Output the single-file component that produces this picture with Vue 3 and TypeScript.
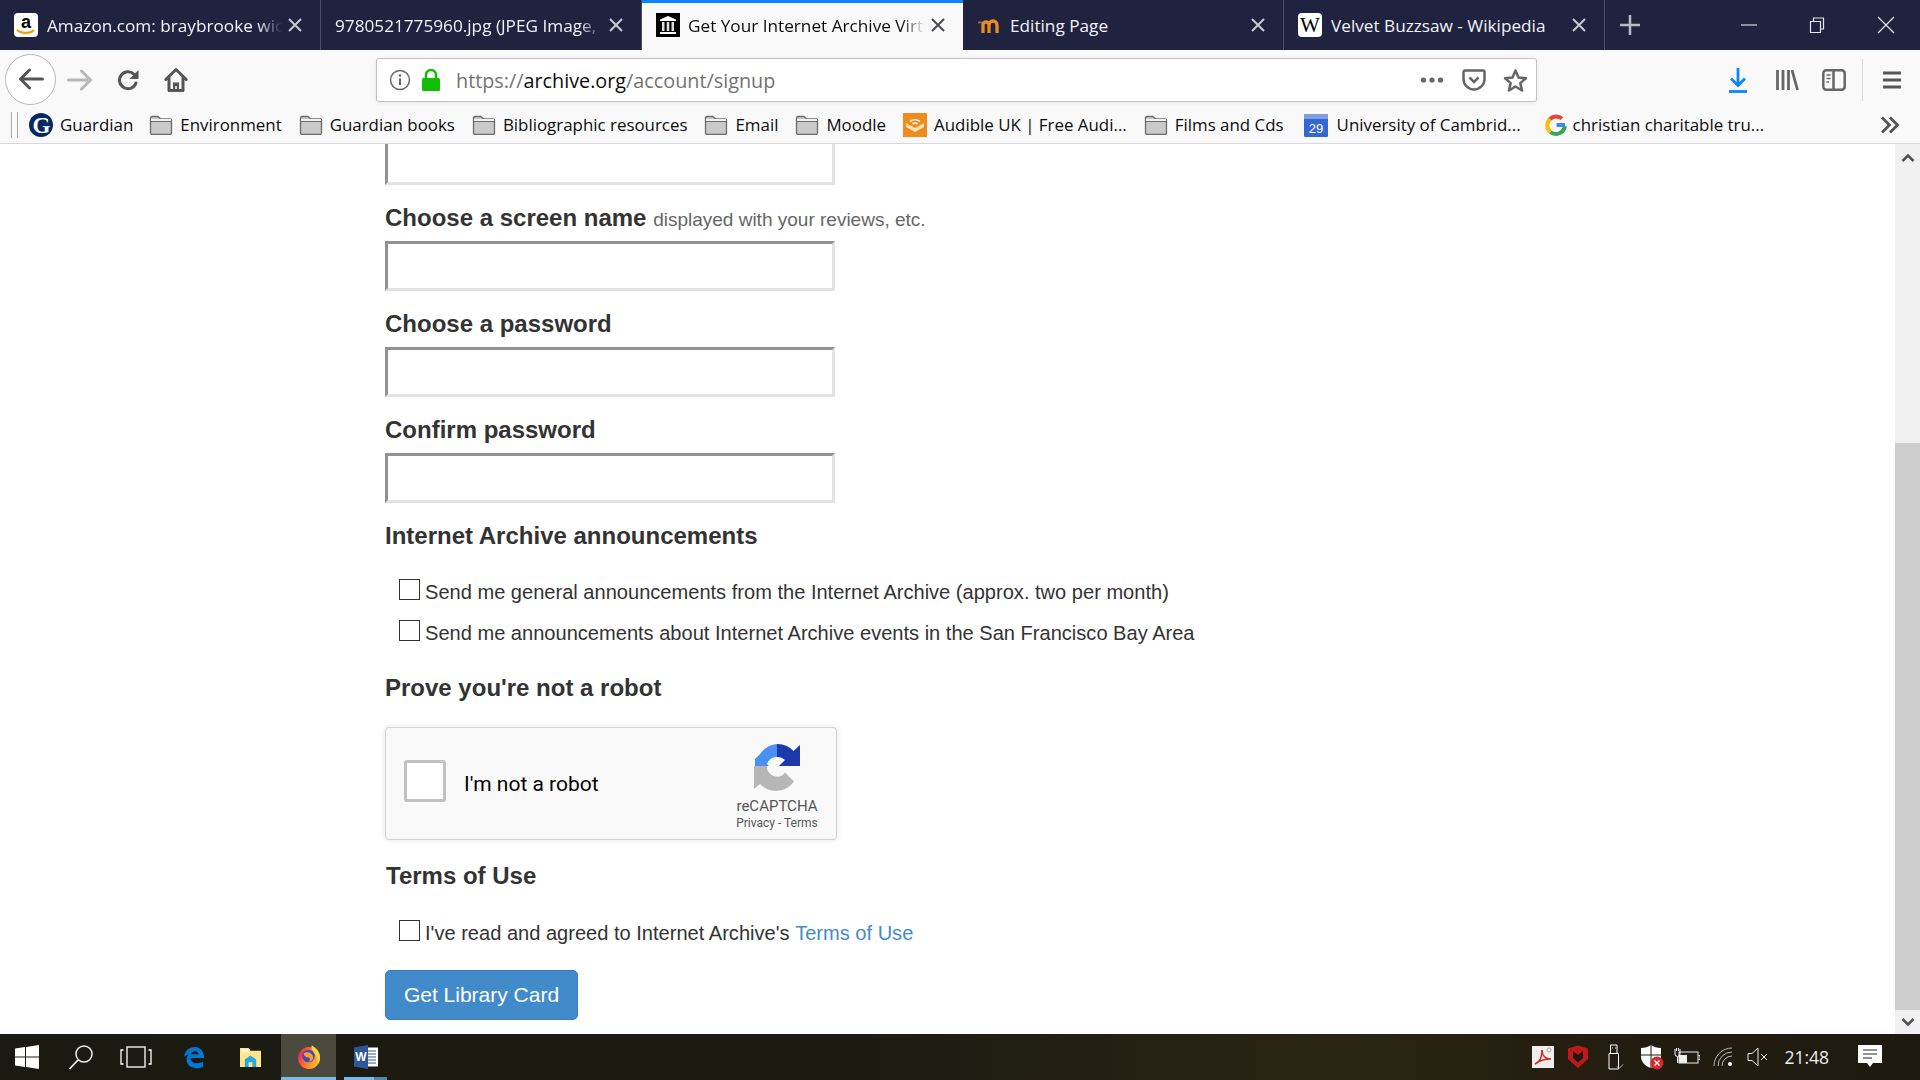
<script setup lang="ts">
const bookmarks = [
  { label: 'Environment' },
  { label: 'Guardian books' },
  { label: 'Bibliographic resources' },
  { label: 'Email' },
  { label: 'Moodle' },
]
const fields = ['Choose a password', 'Confirm password']
const announcements = [
  'Send me general announcements from the Internet Archive (approx. two per month)',
  'Send me announcements about Internet Archive events in the San Francisco Bay Area',
]
</script>

<template>
  <div class="screen">
    <svg class="defs" width="0" height="0" aria-hidden="true">
      <symbol id="folder" viewBox="0 0 24 20">
        <path d="M1.500 18V3a1.500 1.500 0 0 1 1.500-1.500h6l2.500 2.500H21A1.500 1.500 0 0 1 22.500 5.500V18A1.500 1.500 0 0 1 21 19.500H3A1.500 1.500 0 0 1 1.500 18z" fill="#c9c9c9" stroke="#6b6b6b" stroke-width="1.300" />
        <path d="M2 6.500h20" stroke="#6b6b6b" stroke-width="1" />
        <path d="M2 5h20" stroke="#f2f2f2" stroke-width="2" />
      </symbol>
      <symbol id="close" viewBox="0 0 16 16">
        <path d="M2 2l12 12M14 2L2 14" stroke="currentColor" stroke-width="2" fill="none" />
      </symbol>
    </svg>

    <header class="tabstrip">
      <div class="tab">
        <svg class="favicon" viewBox="0 0 24 24"><rect width="24" height="24" rx="4" fill="#fff" /><text x="12" y="15" text-anchor="middle" class="fav-a">a</text><path d="M3 17c5 4 13 4 17 0" stroke="#f90" stroke-width="2" fill="none" /></svg>
        <span class="tab-title">Amazon.com: braybrooke wic</span>
        <svg class="tab-x" viewBox="0 0 16 16"><use href="#close" /></svg>
      </div>
      <div class="tab">
        <span class="tab-title">9780521775960.jpg (JPEG Image,</span>
        <svg class="tab-x" viewBox="0 0 16 16"><use href="#close" /></svg>
      </div>
      <div class="tab active">
        <svg class="favicon" viewBox="0 0 24 24"><rect width="24" height="24" fill="#000" /><path d="M12 3l8 3.500v1.500H4V6.500z" fill="#fff" /><path d="M6 9h2.500v9H6zM10.700 9h2.600v9h-2.600zM15.500 9H18v9h-2.500z" fill="#ddd" /><path d="M4 19h16v2H4z" fill="#fff" /></svg>
        <span class="tab-title">Get Your Internet Archive Virt</span>
        <svg class="tab-x" viewBox="0 0 16 16"><use href="#close" /></svg>
      </div>
      <div class="tab">
        <svg class="favicon" viewBox="0 0 24 24"><path d="M1 9.500h5" stroke="#8a6a45" stroke-width="2" /><path d="M6 20v-8.500M12 20v-8a3 3 0 0 0-6 0M20 20v-8a3.500 3.500 0 0 0-8 0" stroke="#ec8a20" stroke-width="3.300" fill="none" /></svg>
        <span class="tab-title plain">Editing Page</span>
        <svg class="tab-x" viewBox="0 0 16 16"><use href="#close" /></svg>
      </div>
      <div class="tab">
        <svg class="favicon" viewBox="0 0 24 24"><rect width="24" height="24" rx="4" fill="#fff" /><text x="12" y="19" text-anchor="middle" class="fav-w">W</text></svg>
        <span class="tab-title plain">Velvet Buzzsaw - Wikipedia</span>
        <svg class="tab-x" viewBox="0 0 16 16"><use href="#close" /></svg>
      </div>
      <div class="newtab">
        <svg width="22" height="22" viewBox="0 0 22 22"><path d="M11 1v20M1 11h20" stroke="#b9bbc6" stroke-width="2.500" /></svg>
      </div>
      <div class="winctl">
        <svg width="16" height="16" viewBox="0 0 16 16"><path d="M0 8h16" stroke="#d6d7de" stroke-width="1.200" /></svg>
        <svg width="16" height="16" viewBox="0 0 16 16"><path d="M1.500 4.500h10v11h-10zM4.500 4V1h10v11H12" stroke="#e6e7ec" stroke-width="1.200" fill="none" /></svg>
        <svg width="18" height="18" viewBox="0 0 18 18"><path d="M1 1l16 16M17 1L1 17" stroke="#e6e7ec" stroke-width="1.200" /></svg>
      </div>
    </header>

    <nav class="navbar">
      <button class="back" aria-label="Back">
        <svg width="26" height="22" viewBox="0 0 26 22"><path d="M24.500 11H3M11.500 2L2.500 11l9 9" stroke="#555" stroke-width="3" fill="none" stroke-linecap="round" stroke-linejoin="round" /></svg>
      </button>
      <svg class="nav-ico fwd" width="26" height="22" viewBox="0 0 26 22"><path d="M1.500 11H23M14.500 2l9 9-9 9" stroke="#b8b8b8" stroke-width="3" fill="none" stroke-linecap="round" stroke-linejoin="round" /></svg>
      <svg class="nav-ico reload" width="24" height="24" viewBox="0 0 24 24"><path d="M20 15a8.500 8.500 0 1 1-2.200-9" stroke="#555" stroke-width="3" fill="none" stroke-linecap="round" /><path d="M22.500 2v9h-9z" fill="#555" /></svg>
      <svg class="nav-ico home" width="24" height="26" viewBox="0 0 24 26"><path d="M1.800 12.500L12 2.500l10.200 10M5 11v12.500h14V11" stroke="#555" stroke-width="3" fill="none" stroke-linecap="round" stroke-linejoin="round" /><path d="M9 15.500h6V23h-2.200v-4h-1.600v4H9z" fill="#555" /></svg>
      <div class="urlbar">
        <svg width="22" height="22" viewBox="0 0 22 22"><circle cx="11" cy="11" r="9.500" stroke="#666" stroke-width="1.500" fill="none" /><path d="M11 9.500V16" stroke="#666" stroke-width="2" /><circle cx="11" cy="6.500" r="1.300" fill="#666" /></svg>
        <svg class="lock" width="20" height="24" viewBox="0 0 20 24"><path d="M5 11V7a5 5 0 0 1 10 0v4" stroke="#12bc00" stroke-width="2.500" fill="none" /><rect x="1" y="10" width="18" height="13" rx="1.500" fill="#12bc00" /></svg>
        <div class="url"><span>https://</span><b>archive.org</b><span>/account/signup</span></div>
        <svg class="dots" width="24" height="6" viewBox="0 0 24 6"><circle cx="3.500" cy="3" r="2.600" fill="#666" /><circle cx="12" cy="3" r="2.600" fill="#666" /><circle cx="20.500" cy="3" r="2.600" fill="#666" /></svg>
        <svg class="pocket" width="24" height="24" viewBox="0 0 24 24"><path d="M3 2.500h18a1.500 1.500 0 0 1 1.500 1.500v7a10.500 10.500 0 0 1-21 0V4A1.500 1.500 0 0 1 3 2.500z" stroke="#666" stroke-width="2.500" fill="none" /><path d="M7.500 9.500l4.500 4.500 4.500-4.500" stroke="#666" stroke-width="2.500" fill="none" /></svg>
        <svg class="star" width="25" height="25" viewBox="0 0 25 25"><path d="M12.500 2.500l3 7 7.500.7-5.700 4.900 1.800 7.400-6.600-4-6.600 4 1.800-7.400L2 10.200l7.500-.7z" stroke="#666" stroke-width="2.500" fill="none" stroke-linejoin="round" /></svg>
      </div>
      <div class="nav-right">
        <svg class="dl" width="20" height="26" viewBox="0 0 20 26"><path d="M10 1v17M3 11.500l7 7 7-7" stroke="#0a84ff" stroke-width="2.800" fill="none" /><path d="M1 24.500h18" stroke="#0a84ff" stroke-width="2.800" /></svg>
        <svg class="lib" width="24" height="24" viewBox="0 0 24 24"><path d="M2.500 2v20M8 2v20M13.500 2v20M17 2l5.500 20" stroke="#666" stroke-width="2.800" fill="none" /></svg>
        <svg class="side" width="24" height="24" viewBox="0 0 24 24"><rect x="1.300" y="2.300" width="21.400" height="19.400" rx="3" stroke="#666" stroke-width="2.500" fill="none" /><path d="M11.500 3v18" stroke="#666" stroke-width="2.500" /><path d="M4.500 7h4M4.500 10.500h4M4.500 14h2.500" stroke="#666" stroke-width="1.500" /></svg>
        <i class="nav-sep"></i>
        <svg class="menu" width="20" height="20" viewBox="0 0 20 20"><path d="M1 3h18M1 10h18M1 17h18" stroke="#555" stroke-width="2.800" /></svg>
      </div>
    </nav>

    <div class="bookbar">
      <i class="bm-sep"></i>
      <div class="bm guardian">
        <svg class="bm-ico" viewBox="0 0 24 24"><circle cx="12" cy="12" r="12" fill="#052962" /><text x="12.500" y="19.500" text-anchor="middle" class="fav-g">G</text></svg>
        <span>Guardian</span>
      </div>
      <div v-for="b in bookmarks" :key="b.label" class="bm">
        <svg class="bm-ico folder"><use href="#folder" /></svg>
        <span>{{ b.label }}</span>
      </div>
      <div class="bm audible">
        <svg class="bm-ico" viewBox="0 0 24 24"><rect width="24" height="24" fill="#f28a1c" /><path d="M3 10l9 5 9-5v4l-9 5-9-5z" fill="#fde2b5" /><path d="M7 8.500a8 8 0 0 1 10 0M9.500 11a4 4 0 0 1 5 0" stroke="#fff" stroke-width="1.600" fill="none" /></svg>
        <span>Audible UK | Free Audi...</span>
      </div>
      <div class="bm">
        <svg class="bm-ico folder"><use href="#folder" /></svg>
        <span>Films and Cds</span>
      </div>
      <div class="bm cal">
        <svg class="bm-ico" viewBox="0 0 24 24"><rect y="1" width="24" height="23" rx="1" fill="#3367d6" /><rect y="1" width="24" height="5" fill="#7d9fe4" /><text x="12" y="20" text-anchor="middle" class="fav-cal">29</text></svg>
        <span>University of Cambrid...</span>
      </div>
      <div class="bm goog">
        <svg class="bm-ico" viewBox="0 0 24 24"><path d="M21 12H12.500" stroke="#4285f4" stroke-width="4" /><path d="M20.800 13a9 9 0 0 1-14.500 6" stroke="#34a853" stroke-width="4" fill="none" /><path d="M6.300 19a9 9 0 0 1-.300-13" stroke="#fbbc05" stroke-width="4" fill="none" /><path d="M6 6a9 9 0 0 1 12-.500" stroke="#ea4335" stroke-width="4" fill="none" /></svg>
        <span>christian charitable tru...</span>
      </div>
      <svg class="more" width="20" height="18" viewBox="0 0 20 18"><path d="M2 1.500L9.500 9 2 16.500M10 1.500L17.500 9 10 16.500" stroke="#555" stroke-width="2.800" fill="none" /></svg>
    </div>

    <div class="viewport">
      <main class="page">
        <form class="form" @submit.prevent>
          <div class="input"></div>

          <label class="label">Choose a screen name <small>displayed with your reviews, etc.</small></label>
          <div class="input"></div>

          <template v-for="f in fields" :key="f">
            <label class="label">{{ f }}</label>
            <div class="input"></div>
          </template>

          <h3 class="heading ann">Internet Archive announcements</h3>
          <div class="checks">
            <div v-for="a in announcements" :key="a" class="check"><i class="box"></i>{{ a }}</div>
          </div>

          <h3 class="heading robot">Prove you're not a robot</h3>
          <div class="captcha">
            <i class="cap-box"></i>
            <span class="cap-text">I'm not a robot</span>
            <div class="cap-brand">
              <svg width="50" height="50" viewBox="0 0 50 50">
                <path d="M3 24V17L9 11A22 22 0 0 1 25 2V15A10 10 0 0 0 15 22L17 24z" fill="#4a90f2" />
                <path d="M25 2A22 22 0 0 1 41.500 9L48 3V24H27l6-6A10 10 0 0 0 25 15z" fill="#1c3aa9" />
                <path d="M2 24H15A10 10 0 0 0 33 30.500L42 39.500A22 22 0 0 1 8 42L2 47z" fill="#b6b6b6" />
              </svg>
              <div class="cap-name">reCAPTCHA</div>
              <div class="cap-links">Privacy - Terms</div>
            </div>
          </div>

          <h3 class="heading terms">Terms of Use</h3>
          <div class="check"><i class="box"></i>I've read and agreed to Internet Archive's&nbsp;<a class="link">Terms of Use</a></div>

          <button class="submit" type="submit">Get Library Card</button>
        </form>
      </main>
      <aside class="scrollbar">
        <div class="sb-btn top"><svg width="14" height="10" viewBox="0 0 14 10"><path d="M1.500 8L7 2.500 12.500 8" stroke="#505050" stroke-width="2.500" fill="none" /></svg></div>
        <div class="sb-track"><div class="sb-thumb"></div></div>
        <div class="sb-btn"><svg width="14" height="10" viewBox="0 0 14 10"><path d="M1.500 2L7 7.500 12.500 2" stroke="#505050" stroke-width="2.500" fill="none" /></svg></div>
      </aside>
    </div>

    <footer class="taskbar">
      <div class="tb-left">
        <div class="tb-item start"><svg width="24" height="24" viewBox="0 0 24 24"><path d="M0 3.500l10-1.400V11.500H0zM11 2l13-2v11.500H11zM0 12.500h10V22L0 20.500zM11 12.500h13V24l-13-2z" fill="#fff" /></svg></div>
        <div class="tb-item search"><svg width="26" height="26" viewBox="0 0 26 26"><circle cx="16" cy="10" r="8" stroke="#eee" stroke-width="1.500" fill="none" /><path d="M10 16L1.500 25" stroke="#eee" stroke-width="1.800" /></svg></div>
        <div class="tb-item tview"><svg width="32" height="22" viewBox="0 0 32 22"><path d="M3.500 4H1v14h2.500M28.500 4H31v14h-2.500" stroke="#fff" stroke-width="1.300" fill="none" /><rect x="7" y="1" width="18" height="20" stroke="#fff" stroke-width="1.300" fill="none" /></svg></div>
        <div class="tb-item edge"><svg width="22" height="24" viewBox="0 0 24 24"><path d="M1 12C2 4 8 1 13 1c6 0 10 5 10 12H8c0 5 7 8 14 4v6c-9 3-18 0-18-8 0-3 1-5 3-6-2 0-4 1-6 3z" fill="#0078d7" /><path d="M8.500 9H17c0-4-7-5-8.500 0z" fill="#1c1a10" /></svg></div>
        <div class="tb-item explorer"><svg width="23" height="21" viewBox="0 0 24 22"><path d="M1 1h9l2 3h11v17H1z" fill="#ffe48f" /><path d="M2.500 2.500h9v3h-9z" fill="#fff6cc" /><path d="M6 21v-8l6-4 6 4v8h-4v-5h-4v5z" fill="#29a8df" /></svg></div>
        <div class="tb-item firefox on">
          <svg width="24" height="24" viewBox="0 0 24 24">
            <defs><linearGradient id="ff" x1="0" y1="0.300" x2="1" y2="0.700"><stop offset="0" stop-color="#e5234f" /><stop offset="0.450" stop-color="#ff7a2c" /><stop offset="1" stop-color="#ffc22e" /></linearGradient></defs>
            <circle cx="12" cy="13" r="11" fill="url(#ff)" />
            <path d="M14.500 0.500c4.500 2 9 6.500 8.500 12.500 0 2-1 4-2 6 0-5-1-8-4-11-1.500-2-2.500-4.500-2.500-7.500z" fill="#ffd43a" />
            <circle cx="11.500" cy="11" r="6.300" fill="#3d4cc0" />
            <path d="M6.500 8.500c3-2.500 8.500-1.500 9.500 3 .7 3-1.500 5-4.500 5 2-1 2-3.500 0-4-2 0-4-1-5-4z" fill="#ff9a2e" />
          </svg>
        </div>
        <div class="tb-item word on"><svg width="24" height="24" viewBox="0 0 24 24"><rect x="12" y="2.500" width="12" height="19" fill="#fff" /><path d="M14 6h8M14 9h8M14 12h8M14 15h8M14 18h8" stroke="#2b579a" stroke-width="1" /><path d="M0 2.500L14 0v24L0 21.500z" fill="#2b579a" /><text x="7" y="16" text-anchor="middle" class="fav-word">W</text></svg></div>
      </div>
      <div class="tray">
        <svg class="t-pdf" width="22" height="22" viewBox="0 0 22 22"><rect width="22" height="22" fill="#eee" /><path d="M3 18c5-2 7-8 7-14 0 5 3 9 9 9-6 0-11 1-16 5z" stroke="#d62b1f" stroke-width="1.600" fill="none" /><circle cx="17" cy="4" r="2" fill="none" stroke="#aaa" /></svg>
        <svg class="t-mc" width="22" height="24" viewBox="0 0 22 24"><path d="M1 3.500l10-3 10 3V14l-10 9-10-9z" fill="#c01818" /><path d="M6 6l5 4 5-4v7l-5 4.500-5-4.500z" fill="#1c1a10" /></svg>
        <svg class="t-usb" width="16" height="26" viewBox="0 0 16 26"><path d="M1 9.500h9.500V25H1zM2.500 9V1h6.500v8" stroke="#fff" stroke-width="1" fill="none" /><path d="M4 4h1M7 4h1" stroke="#fff" /><path d="M9 22.500l2 2 4-4" stroke="#bbb" fill="none" /></svg>
        <svg class="t-shield" width="24" height="26" viewBox="0 0 24 26"><path d="M11 1c3 2 6 3 10 3v8c0 6-4 10-10 12C5 22 1 18 1 12V4c4 0 7-1 10-3z" fill="#fff" /><path d="M11 1v23M1 11h20" stroke="#1c1a10" /><circle cx="17" cy="19" r="6.500" fill="#d9272e" /><path d="M14.500 16.500l5 5M19.500 16.500l-5 5" stroke="#fff" stroke-width="1.400" /></svg>
        <svg class="t-bat" width="26" height="20" viewBox="0 0 26 20"><rect x="5" y="5" width="19" height="11" stroke="#eee" fill="none" /><rect x="5" y="8" width="8" height="8" fill="#eee" /><path d="M24.500 8.500h1.500v4h-1.500" stroke="#eee" fill="none" /><path d="M1 2v5a2.500 2.500 0 0 0 5 0V2M2.500 1v3M4.500 1v3M3.500 10v6" stroke="#fff" fill="none" /></svg>
        <svg class="t-wifi" width="20" height="20" viewBox="0 0 20 20"><path d="M1 19A18 18 0 0 1 19 1M5 19A14 14 0 0 1 19 5M9 19A10 10 0 0 1 19 9" stroke="#bbb" fill="none" /><circle cx="17" cy="17" r="2" fill="#fff" /></svg>
        <svg class="t-vol" width="22" height="20" viewBox="0 0 22 20"><path d="M1 6.500h4L11 1v18l-6-5.500H1z" stroke="#eee" fill="none" /><path d="M14 7l6 6M20 7l-6 6" stroke="#eee" /></svg>
        <span class="clock">21:48</span>
        <svg class="t-note" width="24" height="24" viewBox="0 0 24 24"><path d="M0 0h24v18h-9l-3 4-3-4H0z" fill="#fff" /><path d="M5 5h14M5 9h14M5 13h9" stroke="#222" /></svg>
      </div>
    </footer>
  </div>
</template>

<style>
html, body { margin: 0; overflow: hidden; }
</style>

<style scoped>
.screen {
  width: 1920px;
  height: 1080px;
  display: flex;
  flex-direction: column;
  overflow: hidden;
  background: #fff;
  font-family: "Open Sans", "Noto Sans", sans-serif;
}
.defs { position: absolute; }

/* Tab strip */
.tabstrip {
  height: 50px;
  flex: none;
  display: flex;
  align-items: stretch;
  background: #202340;
  color: #fff;
  font-size: 17.2px;
}
.tab {
  width: 321px;
  box-sizing: border-box;
  display: flex;
  align-items: center;
  padding: 0 14px;
  border-right: 1px solid #4a4d66;
  color: #f2f2f6;
}
.tab.active {
  background: #f9f9fa;
  color: #0c0c0d;
  border-right: 0;
  border-top: 3px solid #0a84ff;
  padding-bottom: 3px;
}
.favicon { width: 24px; height: 24px; flex: none; margin-right: 9px; }
.active .favicon { margin-right: 8px; }
.fav-a { font: bold 18px "Liberation Sans", sans-serif; fill: #000; }
.fav-w { font: 21px "Liberation Serif", serif; fill: #000; }
.fav-g { font: bold 23px "Liberation Serif", serif; fill: #fff; }
.fav-cal { font: 13px "Liberation Sans", sans-serif; fill: #fff; }
.fav-word { font: bold 12px "Liberation Sans", sans-serif; fill: #fff; }
.tab-title {
  flex: 1;
  min-width: 0;
  white-space: nowrap;
  overflow: hidden;
  -webkit-mask-image: linear-gradient(to right, #000 calc(100% - 24px), transparent);
  mask-image: linear-gradient(to right, #000 calc(100% - 24px), transparent);
}
.tab-title.plain {
  -webkit-mask-image: none;
  mask-image: none;
}
.tab-x { width: 16px; height: 16px; flex: none; margin: 0 3px 0 5px; color: #c9cad3; }
.tab.active .tab-x { color: #4a4a4f; }
.newtab { width: 50px; display: flex; align-items: center; justify-content: center; }
.winctl {
  flex: 1;
  display: flex;
  align-items: center;
  justify-content: flex-end;
  gap: 52px;
  padding-right: 25px;
}

/* Nav */
.navbar {
  height: 58px;
  flex: none;
  display: flex;
  align-items: center;
  background: #f9f9fa;
  box-sizing: border-box;
  padding: 2px 0 0 5px;
}
.back {
  width: 51px;
  height: 51px;
  flex: none;
  box-sizing: border-box;
  margin-top: -2px;
  border-radius: 50%;
  border: 1px solid #b6b6b8;
  background: #fff;
  padding: 0;
  display: flex;
  align-items: center;
  justify-content: center;
}
.nav-ico { flex: none; }
.fwd { margin-left: 11px; }
.reload { margin-left: 23px; }
.home { margin-left: 24px; }
.urlbar {
  width: 1161px;
  height: 44px;
  margin-left: 188px;
  box-sizing: border-box;
  flex: none;
  display: flex;
  align-items: center;
  padding-left: 12px;
  background: #fff;
  border: 1px solid #c2c2c4;
  border-radius: 3px;
  box-shadow: 0 1px 4px rgba(0,0,0,.08);
}
.lock { margin-left: 10px; }
.url { flex: 1; margin-left: 15px; font-size: 19.8px; color: #737373; white-space: nowrap; }
.url b { font-weight: 400; color: #0c0c0d; }
.dots { margin-right: 18px; }
.pocket { margin-right: 17px; }
.star { margin-right: 8px; }
.nav-right { flex: 1; display: flex; align-items: center; padding-left: 191px; }
.lib { margin-left: 27px; }
.side { margin-left: 23px; }
.nav-sep { width: 1px; height: 42px; background: #dcdcde; margin-left: 16px; }
.menu { margin-left: 19px; }

/* Bookmarks */
.bookbar {
  height: 36px;
  flex: none;
  box-sizing: border-box;
  display: flex;
  align-items: center;
  background: #f9f9fa;
  border-bottom: 1px solid #d7d7db;
  font-size: 16.9px;
  color: #0c0c0d;
  padding-left: 11px;
  gap: 17px;
  padding-bottom: 2px;
}
.bm-sep {
  width: 7px;
  height: 26px;
  border-left: 1px solid #a6a6a8;
  border-right: 1px solid #a6a6a8;
  box-sizing: border-box;
  margin-right: -6px;
}
.bm { display: flex; align-items: center; gap: 7px; white-space: nowrap; }
.guardian { margin-right: -1px; }
.cal { margin-left: 3px; gap: 9px; }
.goog { margin-left: 6px; gap: 5px; }
.bm-ico { width: 24px; height: 24px; flex: none; }
.bm-ico.folder { height: 20px; }
.more { margin-left: auto; margin-right: 20px; }

/* Page */
.viewport { flex: 1; min-height: 0; display: flex; overflow: hidden; }
.page { flex: 1; min-width: 0; overflow: hidden; padding-left: 385px; }
.form {
  margin-top: -9px;
  color: #333;
  font-family: "Liberation Sans", Arial, sans-serif;
}
.input {
  width: 450px;
  height: 50px;
  box-sizing: border-box;
  border: 3px solid;
  border-color: #929292 #e3e3e3 #e3e3e3 #929292;
  background: #fff;
}
.label {
  display: block;
  margin: 18px 0 8px;
  font-size: 24px;
  line-height: 30px;
  font-weight: 700;
}
.label small { font-size: 19px; line-height: 1; font-weight: 400; color: #666; }
.heading {
  margin: 0;
  font-size: 24px;
  line-height: 30px;
  font-weight: 700;
}
.ann { margin-top: 18px; }
.checks { margin-top: 21px; }
.robot { margin-top: 19px; }
.terms { margin-top: 21px; margin-left: 1px; margin-bottom: 22px; }
.check {
  height: 41px;
  display: flex;
  align-items: center;
  padding-left: 14px;
  font-size: 20.07px;
  white-space: nowrap;
}
.box {
  width: 21px;
  height: 21px;
  box-sizing: border-box;
  border: 1px solid #333;
  background: #fff;
  margin-right: 5px;
  position: relative;
  top: -3px;
  flex: none;
}
.link { color: #428bca; }
.captcha {
  width: 452px;
  height: 113px;
  margin-top: 24px;
  box-sizing: border-box;
  display: flex;
  align-items: center;
  background: #f9f9f9;
  border: 1px solid #d3d3d3;
  border-radius: 4px;
  box-shadow: 0 0 4px 1px rgba(0,0,0,.08);
  padding-left: 18px;
  font-family: Roboto, sans-serif;
}
.cap-box {
  width: 42px;
  height: 42px;
  margin-top: -5px;
  box-sizing: border-box;
  border: 3px solid #c1c1c1;
  border-radius: 3px;
  background: #fff;
  flex: none;
}
.cap-text { margin-left: 18px; font-size: 21px; color: #000; flex: 1; }
.cap-brand {
  width: 84px;
  margin-right: 17px;
  margin-top: 4px;
  display: flex;
  flex-direction: column;
  align-items: center;
  color: #555;
  white-space: nowrap;
}
.cap-name { font-size: 15px; line-height: 16px; margin-top: 6px; }
.cap-links { font-size: 12px; line-height: 14px; margin-top: 2px; }
.submit {
  display: block;
  width: 193px;
  height: 50px;
  margin-top: 16px;
  padding: 0;
  border: 1px solid #357ebd;
  border-radius: 5px;
  background: #428bca;
  color: #fff;
  font: 21px "Liberation Sans", Arial, sans-serif;
}

/* Scrollbar */
.scrollbar {
  width: 25px;
  flex: none;
  display: flex;
  flex-direction: column;
  background: #f0f0f0;
}
.sb-btn { height: 24px; flex: none; display: flex; align-items: center; justify-content: center; }
.sb-btn.top { padding-top: 4px; box-sizing: border-box; }
.sb-track { flex: 1; padding-top: 275px; display: flex; }
.sb-thumb { flex: 1; background: #cdcdcd; }

/* Taskbar */
.taskbar {
  height: 46px;
  flex: none;
  display: flex;
  justify-content: space-between;
  background: linear-gradient(90deg, #1b1a10 0%, #1d1b11 45%, #2a2514 70%, #231c10 85%, #1e1a10 100%);
  color: #fff;
}
.tb-left { display: flex; align-items: stretch; }
.tb-item {
  display: flex;
  align-items: center;
  justify-content: center;
  width: 55px;
  box-sizing: border-box;
}
.start { width: 53px; }
.edge { width: 56px; margin-left: 3px; }
.explorer { width: 56px; margin-right: 3px; }
.firefox { background: #4c4a3f; }
.on { border-bottom: 3px solid #76b9ed; padding-top: 3px; }
.word {
  width: 43px;
  margin-left: 8px;
  border-image: linear-gradient(90deg, #76b9ed 68%, #4f86ae 68%) 1;
}
.tray { display: flex; align-items: center; padding-right: 38px; }
.t-pdf { margin-right: 13px; }
.t-mc { margin-right: 19px; }
.t-usb { margin-right: 16px; }
.t-shield { margin-right: 10px; }
.t-bat { margin-right: 13px; }
.t-wifi { margin-right: 14px; }
.t-vol { margin-right: 15px; }
.clock { font-size: 17.5px; margin-right: 29px; color: #eee; }
</style>
